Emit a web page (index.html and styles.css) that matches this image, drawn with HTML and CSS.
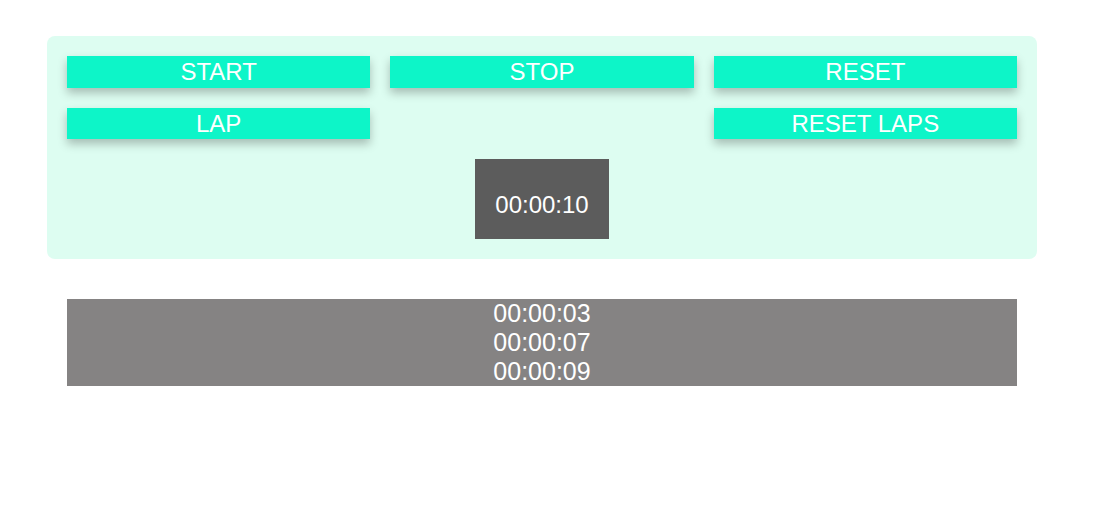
FILE: index.html
```html
<!DOCTYPE html>
<html>
<head>
<meta charset="utf-8">
<link rel="stylesheet" href="styles.css">
</head>
<body>
<div class="app">
  <div class="panel">
    <div class="controls">
      <button class="btn">START</button>
      <button class="btn">STOP</button>
      <button class="btn">RESET</button>
      <button class="btn">LAP</button>
      <span class="spacer"></span>
      <button class="btn">RESET LAPS</button>
    </div>
    <div class="timer-row">
      <div class="timer">00:00:10</div>
    </div>
  </div>
  <div class="laps">
    <div class="lap">00:00:03</div>
    <div class="lap">00:00:07</div>
    <div class="lap">00:00:09</div>
  </div>
</div>
</body>
</html>
```
FILE: styles.css
```css
html, body {
  margin: 0;
  padding: 0;
  background: #ffffff;
  font-family: "Liberation Sans", Arial, sans-serif;
}
.app {
  width: 990px;
  padding: 36px 0 0 47px;
}
.panel {
  background: #ddfdf1;
  border-radius: 8px;
  padding: 20px;
}
.controls {
  display: grid;
  grid-template-columns: repeat(3, 1fr);
  column-gap: 20px;
  row-gap: 20px;
}
.btn {
  display: block;
  border: none;
  margin: 0;
  padding: 2px 0;
  background: #0df5c8;
  color: #ffffff;
  font-family: "Liberation Sans", Arial, sans-serif;
  font-size: 24px;
  line-height: 27.5px;
  text-align: center;
  box-shadow: 0 5px 10px rgba(0, 0, 0, 0.25);
}
.timer-row {
  display: flex;
  justify-content: center;
  margin-top: 20px;
}
.timer {
  background: #5c5c5c;
  color: #ffffff;
  font-size: 24px;
  line-height: 28px;
  padding: 32px 20px 20px;
}
.laps {
  margin: 40px 20px 0;
  background: #858383;
  color: #ffffff;
  font-size: 25px;
  text-align: center;
}
```
